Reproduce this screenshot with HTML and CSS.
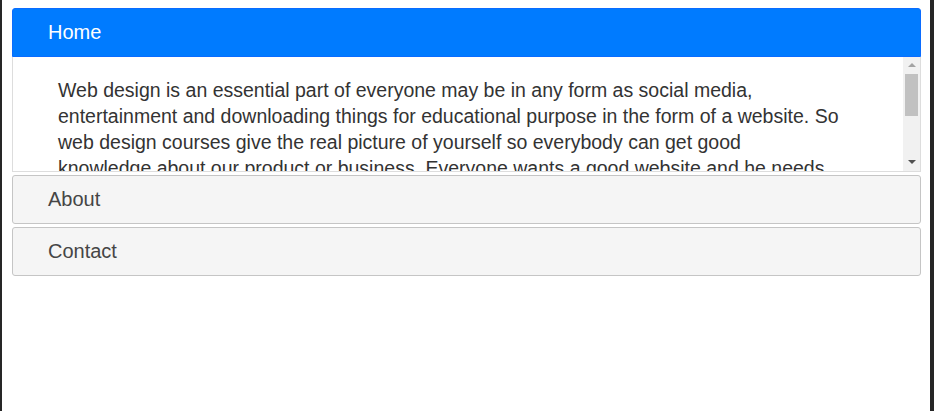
FILE: index.html
```html
<!DOCTYPE html>
<html lang="en">
<head>
    <meta charset="UTF-8">
    <meta name="viewport" content="width=device-width, initial-scale=1.0">
    <title>Accordion</title>
    <link rel="stylesheet" href="styles.css">
</head>
<body>
    <div id="page">
        <div id="accordion">
            <h3 class="header active">Home</h3>
            <div class="panel">
                <div class="content">
                    <p>Web design is an essential part of everyone may be in any form as social media, entertainment and downloading things for educational purpose in the form of a website. So web design courses give the real picture of yourself so everybody can get good<br>knowledge about our product or business. Everyone wants a good website and he needs professional web designer for it. A web designer should know the basics of HTML, CSS and JavaScript to build a responsive website for every device.</p>
                </div>
                <div class="scrollbar">
                    <span class="arrow up"></span>
                    <span class="thumb"></span>
                    <span class="arrow down"></span>
                </div>
            </div>
            <h3 class="header">About</h3>
            <h3 class="header">Contact</h3>
        </div>
    </div>
</body>
</html>
```
FILE: styles.css
```css
html{
    background: #262626;
}
body{
    margin: 0;
    font-family: "Liberation Sans", Arial, sans-serif;
}
#page{
    margin: 0 4px 0 2px;
    height: 411px;
    background: #fff;
    padding: 8px 9px 0 10px;
    box-sizing: border-box;
}
#accordion{
    display: flex;
    flex-direction: column;
    gap: 3px;
}
.header{
    margin: 0;
    padding: 12px 35px;
    font-size: 20px;
    line-height: 23px;
    font-weight: normal;
    color: #454545;
    background: #f5f5f5;
    border: 1px solid #c5c5c5;
    border-radius: 3px;
}
.header.active{
    color: #fff;
    background: #007bff;
    border-color: #0a6cff;
    border-radius: 3px 3px 0 0;
}
.panel{
    position: relative;
    margin-top: -3px;
}
.content{
    height: 115px;
    box-sizing: border-box;
    overflow: hidden;
    padding: 20px 52px 20px 45px;
    border: 1px solid #ddd;
    border-top: 0;
    color: #333;
    font-size: 19.5px;
    line-height: 26px;
}
.content p{
    margin: 0;
}
/* drawn scrollbar, the headless browser hides the real one */
.scrollbar{
    position: absolute;
    top: 0;
    right: 1px;
    bottom: 1px;
    width: 17px;
    background: #f1f1f1;
    display: flex;
    flex-direction: column;
    align-items: center;
}
.arrow{
    width: 0;
    height: 0;
    border-left: 4px solid transparent;
    border-right: 4px solid transparent;
}
.arrow.up{
    margin-top: 6px;
    border-bottom: 4px solid #a3a3a3;
}
.arrow.down{
    margin-top: auto;
    margin-bottom: 7px;
    border-top: 4px solid #505050;
}
.thumb{
    margin-top: 7px;
    width: 13px;
    height: 42px;
    background: #c1c1c1;
}
```
